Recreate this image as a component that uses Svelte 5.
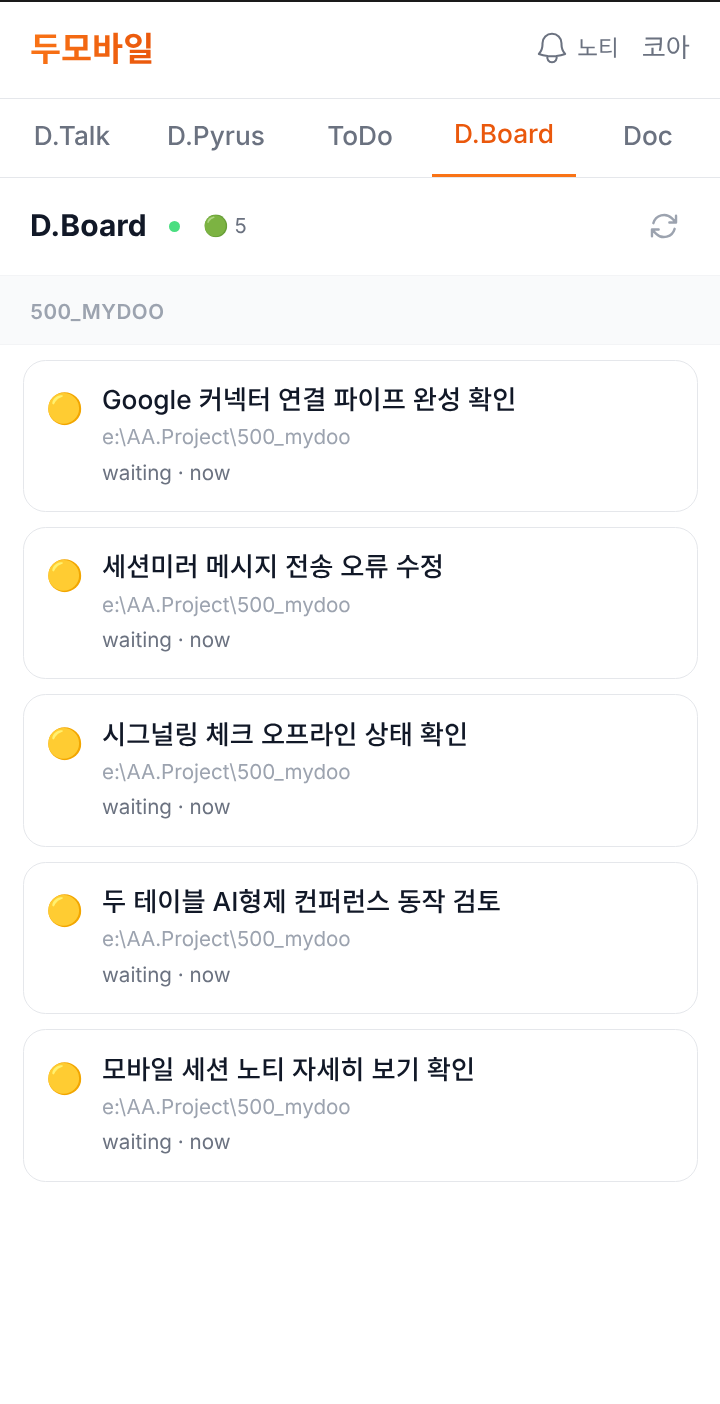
<script>
  const tabs = [
    { label: 'D.Talk' },
    { label: 'D.Pyrus' },
    { label: 'ToDo' },
    { label: 'D.Board', active: true },
    { label: 'Doc' }
  ];
  const sessions = [
    'Google 커넥터 연결 파이프 완성 확인',
    '세션미러 메시지 전송 오류 수정',
    '시그널링 체크 오프라인 상태 확인',
    '두 테이블 AI형제 컨퍼런스 동작 검토',
    '모바일 세션 노티 자세히 보기 확인'
  ];
</script>

<div class="page">
  <header class="top">
    <div class="logo">두모바일</div>
    <div class="actions">
      <button class="action">
        <svg width="38" height="38" viewBox="0 0 24 24" fill="none" stroke="currentColor" stroke-width="1.3" stroke-linecap="round" stroke-linejoin="round"><path d="M14.857 17.082a23.848 23.848 0 0 0 5.454-1.31A8.967 8.967 0 0 1 18 9.75V9A6 6 0 0 0 6 9v.75a8.967 8.967 0 0 1-2.312 6.022c1.733.64 3.56 1.085 5.455 1.31m5.714 0a24.255 24.255 0 0 1-5.714 0m5.714 0a3 3 0 1 1-5.714 0"/></svg>
        <span class="label">노티</span>
      </button>
      <button class="action core"><span>코아</span></button>
    </div>
  </header>

  <nav class="tabs">
    {#each tabs as tab}
      <div class="tab" class:active={tab.active}>{tab.label}</div>
    {/each}
  </nav>

  <section class="board-head">
    <h1>D.Board</h1>
    <span class="dot"></span>
    <span class="count"><span class="emoji">🟢</span> 5</span>
    <button class="refresh" aria-label="새로고침">
      <svg width="32" height="32" viewBox="0 0 24 24" fill="none" stroke="currentColor" stroke-width="1.8" stroke-linecap="round" stroke-linejoin="round"><path d="M16.023 9.348h4.992v-.001M2.985 19.644v-4.992m0 0h4.992m-4.993 0 3.181 3.183a8.25 8.25 0 0 0 13.803-3.7M4.031 9.865a8.25 8.25 0 0 1 13.803-3.7l3.181 3.182m0-4.991v4.99"/></svg>
    </button>
  </section>

  <div class="group">500_MYDOO</div>

  <div class="list">
    {#each sessions as title}
      <article class="card">
        <span class="status">🟡</span>
        <div class="body">
          <div class="title">{title}</div>
          <div class="path">e:\AA.Project\500_mydoo</div>
          <div class="meta">waiting · now</div>
        </div>
      </article>
    {/each}
  </div>
</div>

<style>
  :global(body) {
    margin: 0;
    background: #fff;
  }
  .page {
    height: 1404px;
    box-sizing: border-box;
    border-top: 2px solid #1a1a1a;
    font-family: Inter, "Noto Sans CJK KR", sans-serif;
    text-rendering: geometricPrecision;
    will-change: transform;
    background: #fff;
    overflow: hidden;
  }
  button {
    font: inherit;
    text-rendering: inherit;
    background: none;
    border: 0;
    padding: 0;
    color: inherit;
  }
  .top {
    height: 97px;
    box-sizing: border-box;
    display: flex;
    align-items: center;
    justify-content: space-between;
    padding: 0 30px 8px;
    border-bottom: 1px solid #e5e7eb;
  }
  .logo {
    font-size: 33.75px;
    font-weight: 700;
    background: linear-gradient(90deg, #f97316, #ea580c);
    -webkit-background-clip: text;
    background-clip: text;
    -webkit-text-fill-color: transparent;
  }
  .actions {
    display: flex;
    align-items: center;
    gap: 23px;
    color: #6b7280;
  }
  .action {
    display: flex;
    align-items: center;
    gap: 6px;
    font-size: 22.5px;
    color: #6b7280;
  }
  .action svg {
    margin-top: 4px;
  }
  .label {
    margin-top: 2px;
  }
  .core {
    font-size: 26.25px;
  }
  .tabs {
    display: flex;
    height: 79px;
    box-sizing: border-box;
    border-bottom: 1px solid #e5e7eb;
  }
  .tab {
    flex: 1;
    display: flex;
    align-items: center;
    justify-content: center;
    padding-bottom: 4px;
    font-size: 26.25px;
    font-weight: 500;
    color: #6b7280;
    box-sizing: border-box;
  }
  .tab.active {
    color: #ea580c;
    border-bottom: 3px solid #f97316;
  }
  .board-head {
    height: 98px;
    box-sizing: border-box;
    display: flex;
    align-items: center;
    padding: 0 30px 1px;
    border-bottom: 1px solid #f3f4f6;
  }
  h1 {
    margin: 0;
    font-size: 30px;
    font-weight: 700;
    color: #111827;
  }
  .dot {
    width: 11px;
    height: 11px;
    border-radius: 50%;
    background: #4ade80;
    margin-left: 22px;
  }
  .count {
    margin-left: 24px;
    font-size: 20.625px;
    word-spacing: -1px;
    color: #6b7280;
  }
  .refresh {
    margin-left: auto;
    margin-right: 10px;
    display: flex;
    color: #9ca3af;
  }
  .group {
    height: 68.6px;
    box-sizing: border-box;
    display: flex;
    align-items: center;
    padding: 4px 30px 0;
    background: #f9fafb;
    border-bottom: 1px solid #f3f4f6;
    font-size: 20.625px;
    font-weight: 600;
    letter-spacing: 0.52px;
    color: #9ca3af;
  }
  .list {
    display: flex;
    flex-direction: column;
    gap: 15px;
    padding: 15px 22.5px;
  }
  .card {
    display: flex;
    gap: 18.5px;
    height: 152.4px;
    box-sizing: border-box;
    padding: 20px 22px;
    border: 1px solid #e5e7eb;
    border-radius: 22.5px;
  }
  .status {
    font-size: 30px;
    line-height: 1;
    margin: 13.5px 0 0 1px;
    width: 37px;
  }
  .title {
    font-size: 26.25px;
    font-weight: 500;
    color: #111827;
    line-height: 36px;
    margin-top: 2.5px;
  }
  .path {
    font-size: 20.625px;
    color: #9ca3af;
    line-height: 34px;
    margin-top: 1.2px;
  }
  .meta {
    font-size: 20.625px;
    color: #6b7280;
    line-height: 34px;
    margin-top: 1.3px;
  }
</style>
